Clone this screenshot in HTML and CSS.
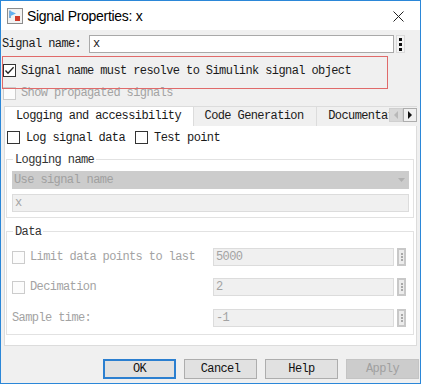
FILE: index.html
```html
<!DOCTYPE html>
<html lang="en">
<head>
    <meta charset="UTF-8">
    <title>Signal Properties: x</title>
    <link rel="stylesheet" href="styles.css">
</head>
<body>
    <div class="win">
        <!--标题栏-->
        <div class="titlebar">
            <svg class="app-icon" width="16" height="16" viewBox="0 0 16 16">
                <rect x="0.5" y="0.5" width="15" height="15" fill="#f2f2f2" stroke="#8c8c8c"/>
                <path d="M3 2.5 V10" stroke="#2f7fc8" stroke-width="1.2"/>
                <path d="M3.5 3 L9 5.5 L3.5 8 Z" fill="#5fb0f0"/>
                <rect x="8" y="8" width="5" height="5" fill="#d03a2a"/>
            </svg>
            <span class="title">Signal Properties: x</span>
            <svg class="close" width="11" height="11" viewBox="0 0 11 11">
                <path d="M0.5 0.5 L10.5 10.5 M10.5 0.5 L0.5 10.5" stroke="#222" stroke-width="1"/>
            </svg>
        </div>

        <div class="client">
            <div class="row name-row">
                <span class="name-label">Signal name:</span>
                <span class="edit">x</span>
                <span class="kebab"><i></i><i></i><i></i></span>
            </div>

            <div class="row resolve-row">
                <span class="cb checked">
                    <svg width="13" height="13" viewBox="0 0 13 13"><path d="M2.5 6.5 L5 9.2 L10.6 3.2" fill="none" stroke="#222" stroke-width="1.3"/></svg>
                </span>
                <span class="lbl">Signal name must resolve to Simulink signal object</span>
            </div>

            <div class="row show-row disabled">
                <span class="cb"></span>
                <span class="lbl">Show propagated signals</span>
            </div>

            <!--选项卡-->
            <div class="tabs">
                <div class="tab active">Logging and accessibility</div>
                <div class="tab">Code Generation</div>
                <div class="tab clip">Documentation</div>
                <span class="tab-arrow off"><svg width="6" height="8" viewBox="0 0 6 8"><path d="M5 0 L1 4 L5 8 Z" fill="#b8b8b8"/></svg></span>
                <span class="tab-arrow"><svg width="6" height="8" viewBox="0 0 6 8"><path d="M1 0 L5 4 L1 8 Z" fill="#111"/></svg></span>
            </div>

            <div class="panel">
                <div class="row log-row">
                    <span class="cb"></span>
                    <span class="lbl">Log signal data</span>
                    <span class="cb test-cb"></span>
                    <span class="lbl">Test point</span>
                </div>

                <div class="group logging">
                    <span class="legend">Logging name</span>
                    <div class="combo">Use signal name<svg width="7" height="4" viewBox="0 0 7 4"><path d="M0 0 H7 L3.5 4 Z" fill="#b0b0b0"/></svg></div>
                    <div class="edit dim wide">x</div>
                </div>

                <div class="group data">
                    <span class="legend">Data</span>
                    <div class="row data-row disabled">
                        <span class="cb"></span>
                        <span class="lbl">Limit data points to last</span>
                        <span class="edit dim num">5000</span>
                        <span class="kebab dim"><i></i><i></i><i></i></span>
                    </div>
                    <div class="row data-row disabled">
                        <span class="cb"></span>
                        <span class="lbl">Decimation</span>
                        <span class="edit dim num">2</span>
                        <span class="kebab dim"><i></i><i></i><i></i></span>
                    </div>
                    <div class="row data-row disabled">
                        <span class="plain">Sample time:</span>
                        <span class="edit dim num">-1</span>
                        <span class="kebab dim"><i></i><i></i><i></i></span>
                    </div>
                </div>
            </div>

            <!--底部按钮-->
            <div class="buttons">
                <span class="btn focus">OK</span>
                <span class="btn">Cancel</span>
                <span class="btn">Help</span>
                <span class="btn off">Apply</span>
            </div>

            <!--红色标注框-->
            <div class="highlight"></div>
        </div>
    </div>
</body>
</html>
```

FILE: styles.css
```css
*{
    margin:0;padding:0;
    box-sizing:border-box;
}
body{
    background:#fff;
}
.win{
    width:421px;
    height:384px;
    border:1px solid #2b87d8;
    display:flex;
    flex-direction:column;
    font-family:"Liberation Mono","Noto Sans CJK SC",monospace;
    font-size:12px;
    letter-spacing:-0.6px;
    color:#1a1a1a;
}
.titlebar{
    height:29px;
    background:#fff;
    display:flex;
    align-items:center;
    padding-left:6px;
    flex:none;
}
.app-icon{
    margin-right:4px;
    margin-top:1px;
}
.title{
    font-family:"Liberation Sans",Arial,sans-serif;
    font-size:14px;
    letter-spacing:-0.3px;
    color:#000;
}
.close{
    margin-left:auto;
    margin-right:16px;
    margin-top:1px;
}
.client{
    flex:1;
    background:#f0f0f0;
    position:relative;
    display:flex;
    flex-direction:column;
}
.row{
    display:flex;
    align-items:center;
}
.name-row{
    margin-top:5px;
    height:18px;
    padding-left:1px;
}
.name-label{
    width:87px;
}
.edit{
    height:18px;
    width:305px;
    background:#fff;
    border:1px solid #a9a9a9;
    padding-left:3px;
    line-height:16px;
}
.kebab{
    width:9px;
    height:18px;
    margin-left:2px;
    border:1px solid #dadada;
    background:#f4f4f4;
    display:flex;
    flex-direction:column;
    align-items:center;
    justify-content:center;
    gap:2px;
}
.kebab i{
    width:3px;
    height:3px;
    background:#111;
}
.kebab.dim{
    border:2px solid #c8c8c8;
    background:#ececec;
    gap:1px;
}
.kebab.dim i{
    width:2px;
    height:2px;
    background:#a8a8a8;
}
.cb{
    width:13px;
    height:13px;
    border:1px solid #333;
    background:#fff;
    flex:none;
    display:flex;
}
.cb svg{
    margin:-1px;
}
.lbl{
    margin-left:5px;
    white-space:nowrap;
}
.resolve-row{
    margin-top:7px;
    height:21px;
    padding-left:2px;
}
.show-row{
    margin-top:2px;
    height:20px;
    padding-left:2px;
}
.disabled{
    color:#a3a3a3;
}
.disabled .cb{
    border-color:#cccccc;
    background:#fcfcfc;
}
.tabs{
    margin:3px 3px 0 3px;
    height:20px;
    display:flex;
    border-top:1px solid #dcdcdc;
    flex:none;
}
.tab{
    height:19px;
    line-height:18px;
    padding-left:11px;
    border-right:1px solid #dcdcdc;
    white-space:nowrap;
    overflow:hidden;
}
.tab.active{
    width:190px;
    background:#fff;
    border-left:1px solid #dcdcdc;
    height:20px;
    margin-top:-1px;
    border-top:1px solid #dcdcdc;
    line-height:18px;
}
.tab:nth-child(2){
    width:124px;
}
.tab.clip{
    width:72px;
    border-right:none;
}
.tab-arrow{
    width:14px;
    height:14px;
    margin-top:1px;
    border:1px solid #adadad;
    background:#f0f0f0;
    display:flex;
    align-items:center;
    justify-content:center;
}
.tab-arrow.off{
    background:#d8d8d8;
    border-color:#cfcfcf;
}
.panel{
    margin:0 3px;
    height:220px;
    background:#fff;
    border:1px solid #dcdcdc;
    border-top:none;
    flex:none;
}
.log-row{
    margin-top:4px;
    height:15px;
    padding-left:2px;
}
.log-row .lbl{
    margin-left:6px;
}
.test-cb{
    margin-left:10px;
}
.group{
    margin:14px 2px 0 1px;
    border:1px solid #e2e2e2;
    padding:0 4px 5px 5px;
    display:flex;
    flex-direction:column;
}
.legend{
    align-self:flex-start;
    height:14px;
    line-height:14px;
    margin-top:-7px;
    margin-left:1px;
    padding:0 2px;
    background:#fff;
    color:#333;
}
.combo{
    margin-top:4px;
    height:18px;
    background:#cccccc;
    color:#a0a0a0;
    padding-left:2px;
    line-height:18px;
    display:flex;
    align-items:center;
    justify-content:space-between;
    padding-right:4px;
}
.edit.dim{
    background:#f0f0f0;
    border-color:#dcdcdc;
    color:#a3a3a3;
    padding-left:2px;
}
.edit.wide{
    width:auto;
    margin-top:5px;
}
.data{
    margin-top:13px;
    padding:0 7px 7px 5px;
}
.data-row{
    height:18px;
    margin-top:12px;
}
.data-row:nth-child(2){
    margin-top:9px;
}
.data-row:nth-child(4){
    margin-top:13px;
}
.data-row .lbl{
    margin-left:5px;
}
.edit.num{
    width:181px;
    margin-left:auto;
}
.data-row .kebab{
    margin-left:3px;
}
.plain{
    white-space:nowrap;
}
.buttons{
    margin-top:13px;
    display:flex;
    justify-content:flex-end;
    gap:8px;
    padding-right:1px;
}
.btn{
    width:73px;
    height:20px;
    border:1px solid #adadad;
    background:#e1e1e1;
    text-align:center;
    line-height:18px;
    color:#111;
}
.btn.focus{
    border:2px solid #2b7fd0;
    line-height:16px;
}
.btn.off{
    background:#cccccc;
    border-color:#c4c4c4;
    color:#a0a0a0;
}
.highlight{
    position:absolute;
    left:1px;
    top:26px;
    width:386px;
    height:33px;
    border:1px solid #e06a6a;
}
```
